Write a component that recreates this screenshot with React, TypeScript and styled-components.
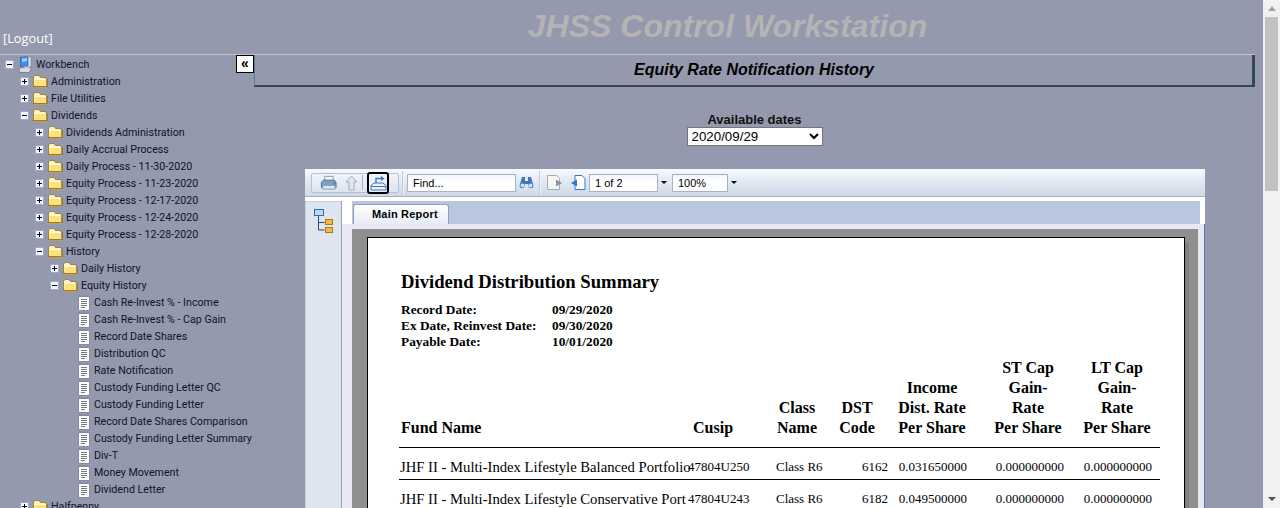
import React from 'react';
import styled, { createGlobalStyle } from 'styled-components';

const GlobalStyle = createGlobalStyle`
  html, body {
    margin: 0;
    padding: 0;
    height: 508px;
    overflow: hidden;
    background: #9499ad;
  }
`;

interface TreeNode {
  label: string;
  depth: number;
  kind: 'root' | 'open' | 'closed' | 'leaf';
}

const TREE: TreeNode[] = [
  { label: 'Workbench', depth: 0, kind: 'root' },
  { label: 'Administration', depth: 1, kind: 'closed' },
  { label: 'File Utilities', depth: 1, kind: 'closed' },
  { label: 'Dividends', depth: 1, kind: 'open' },
  { label: 'Dividends Administration', depth: 2, kind: 'closed' },
  { label: 'Daily Accrual Process', depth: 2, kind: 'closed' },
  { label: 'Daily Process - 11-30-2020', depth: 2, kind: 'closed' },
  { label: 'Equity Process - 11-23-2020', depth: 2, kind: 'closed' },
  { label: 'Equity Process - 12-17-2020', depth: 2, kind: 'closed' },
  { label: 'Equity Process - 12-24-2020', depth: 2, kind: 'closed' },
  { label: 'Equity Process - 12-28-2020', depth: 2, kind: 'closed' },
  { label: 'History', depth: 2, kind: 'open' },
  { label: 'Daily History', depth: 3, kind: 'closed' },
  { label: 'Equity History', depth: 3, kind: 'open' },
  { label: 'Cash Re-Invest % - Income', depth: 4, kind: 'leaf' },
  { label: 'Cash Re-Invest % - Cap Gain', depth: 4, kind: 'leaf' },
  { label: 'Record Date Shares', depth: 4, kind: 'leaf' },
  { label: 'Distribution QC', depth: 4, kind: 'leaf' },
  { label: 'Rate Notification', depth: 4, kind: 'leaf' },
  { label: 'Custody Funding Letter QC', depth: 4, kind: 'leaf' },
  { label: 'Custody Funding Letter', depth: 4, kind: 'leaf' },
  { label: 'Record Date Shares Comparison', depth: 4, kind: 'leaf' },
  { label: 'Custody Funding Letter Summary', depth: 4, kind: 'leaf' },
  { label: 'Div-T', depth: 4, kind: 'leaf' },
  { label: 'Money Movement', depth: 4, kind: 'leaf' },
  { label: 'Dividend Letter', depth: 4, kind: 'leaf' },
  { label: 'Halfpenny', depth: 1, kind: 'closed' },
];

const DATES = [
  ['Record Date:', '09/29/2020'],
  ['Ex Date, Reinvest Date:', '09/30/2020'],
  ['Payable Date:', '10/01/2020'],
];

const HEADERS = [
  ['Fund Name'],
  ['Cusip'],
  ['Class', 'Name'],
  ['DST', 'Code'],
  ['Income', 'Dist. Rate', 'Per Share'],
  ['ST Cap', 'Gain-', 'Rate', 'Per Share'],
  ['LT Cap', 'Gain-', 'Rate', 'Per Share'],
];

const FUNDS = [
  ['JHF II - Multi-Index Lifestyle Balanced Portfolio', '47804U250', 'Class R6', '6162', '0.031650000'],
  ['JHF II - Multi-Index Lifestyle Conservative Port', '47804U243', 'Class R6', '6182', '0.049500000'],
];

const Expander = ({ open }: { open: boolean }) => (
  <svg width="9" height="9" viewBox="0 0 9 9">
    <rect x="0.5" y="0.5" width="8" height="8" fill="#f4f6fa" stroke="#8fb0d0" />
    <path d={open ? 'M2 4.5h5' : 'M2 4.5h5M4.5 2v5'} stroke="#000" fill="none" />
  </svg>
);

const FolderIcon = () => (
  <svg width="16" height="15" viewBox="0 0 16 15">
    <path d="M1.500 12V3L3 1.500h4L8.500 3.500h5.500V12z" fill="#fff4c0" stroke="#a08438" />
    <path d="M2.500 5.500h11.500V12H2.500z" fill="#fbe27c" />
    <path d="M2.500 5.500h11.500" stroke="#fffbe0" />
    <path d="M1 12.500h13.500M15.500 5v8" stroke="#9c7a28" fill="none" />
    <path d="M2 13.500h13" stroke="#c0a050" />
  </svg>
);

const ComputerIcon = () => (
  <svg width="14" height="17" viewBox="0 0 14 17">
    <path d="M4 1 10 0 13 1.500V11l-8 1.500z" fill="#dfe2ec" stroke="#7a7f98" strokeWidth="0.7" />
    <path d="M2.500 1.500 10 0.800V9.500L2.500 10.500z" fill="#3f8fe8" stroke="#1f5fb8" strokeWidth="0.7" />
    <path d="M4 2.500 9 2.200V5L4 6z" fill="#9fd0ff" />
    <path d="M0.500 12.500 10 10.500 13.500 13 11 16.500H2z" fill="#d8dae4" stroke="#6a6f88" strokeWidth="0.7" />
  </svg>
);

const DocIcon = () => (
  <svg width="14" height="16" viewBox="0 0 14 16">
    <path d="M1.500 1.500h11v14h-11z" fill="#fcfcf8" stroke="#7f86b8" />
    <path d="M2 1h10" stroke="#8a7a50" strokeDasharray="1 1" />
    <path d="M4 4.500h6M4 6.500h6M4 8.500h6M4 10.500h6M4 12.500h4" stroke="#77777f" />
  </svg>
);

const PrintIcon = () => (
  <svg width="17" height="16" viewBox="0 0 18 16">
    <path d="M5 1h9v5H5z" fill="#f4f6fa" stroke="#8a9ab0" />
    <path d="M1.500 7 4 5h11l2 2v6H1.500z" fill="#7d9ec8" stroke="#4f6f98" />
    <path d="M3 10.500h13v4H3z" fill="#dfe6f0" stroke="#8a9ab0" />
    <rect x="14" y="7.500" width="2" height="2" fill="#4a9a4a" />
  </svg>
);

const UpIcon = () => (
  <svg width="13" height="16" viewBox="0 0 13 16">
    <path d="M6.500 1 12 7H9v8H4V7H1z" fill="#e3e6ea" stroke="#a8abb0" />
  </svg>
);

const ExportIcon = () => (
  <svg width="17" height="16" viewBox="0 0 17 16">
    <path d="M1 10.500 4 8h9l3 2.500V15H1z" fill="#e8f0fa" stroke="#3f78b8" />
    <path d="M1 11.500h15" stroke="#3f78b8" />
    <path d="M6 8V3.500h6" stroke="#3f78b8" fill="none" strokeWidth="1.400" />
    <path d="M11 1l3.500 2.500L11 6z" fill="#3f78b8" />
  </svg>
);

const BinocularsIcon = () => (
  <svg width="15" height="13" viewBox="0 0 15 13">
    <path d="M3 1h3v4h3V1h3l2.500 9-1 2H10L9 8H6l-1 4H1.500l-1-2z" fill="#3f78b8" />
    <circle cx="3.500" cy="9.500" r="2" fill="#cfe0f4" />
    <circle cx="11.500" cy="9.500" r="2" fill="#cfe0f4" />
  </svg>
);

const PageIcon = ({ active }: { active: boolean }) => {
  const tone = active ? '#2f78c8' : '#a8abb0';
  return (
    <svg width="16" height="15" viewBox="0 0 16 15">
      {active ? (
        <>
          <path d="M5 0.500h7l3 3v11H5z" fill="#fff" stroke={tone} />
          <path d="M7 4.500 1 8l6 3.500z" fill={tone} />
        </>
      ) : (
        <>
          <path d="M0.500 0.500h9l3 3v11H0.500z" fill="#f6f6f6" stroke={tone} />
          <path d="M9 4.500 15 8l-6 3.500z" fill="#8f9296" />
        </>
      )}
    </svg>
  );
};

const GroupTreeIcon = () => (
  <svg width="20" height="24" viewBox="0 0 20 24">
    <rect x="0.500" y="0.500" width="9" height="6" fill="#bcd8f4" stroke="#2f6ea8" />
    <path d="M4.500 7v14h6M4.500 13.500h6" stroke="#1f4f7f" fill="none" />
    <rect x="11.500" y="10.500" width="7" height="5" fill="#f4b840" stroke="#a87818" />
    <rect x="11.500" y="18.500" width="7" height="5" fill="#f4b840" stroke="#a87818" />
  </svg>
);

const App = () => (
  <Page>
    <GlobalStyle />
    <Workspace>
      <Header>
        <Logout>[Logout]</Logout>
        <AppTitle>JHSS Control Workstation</AppTitle>
      </Header>
      <Columns>
        <Sidebar>
          <CollapseButton>«</CollapseButton>
          {TREE.map((node) => (
            <TreeRow key={node.label} $depth={node.depth}>
              <ExpanderSlot>
                {node.kind !== 'leaf' && <Expander open={node.kind !== 'closed'} />}
              </ExpanderSlot>
              {node.kind === 'root' && <RootIconSlot><ComputerIcon /></RootIconSlot>}
              {(node.kind === 'open' || node.kind === 'closed') && <IconSlot><FolderIcon /></IconSlot>}
              {node.kind === 'leaf' && <IconSlot><DocIcon /></IconSlot>}
              <span>{node.label}</span>
            </TreeRow>
          ))}
        </Sidebar>
        <Content>
          <TitleBox>Equity Rate Notification History</TitleBox>
          <DatePicker>
            <DateLabel>Available dates</DateLabel>
            <DateSelect defaultValue="2020/09/29">
              <option>2020/09/29</option>
            </DateSelect>
          </DatePicker>
          <Viewer>
            <Toolbar>
              <ButtonGroup>
                <PrintSlot><PrintIcon /></PrintSlot>
                <UpIcon />
                <GroupRule />
                <ExportButton><ExportIcon /></ExportButton>
              </ButtonGroup>
              <ToolRule />
              <FindInput>Find...</FindInput>
              <BinocularsIcon />
              <PagerRule />
              <PageIcon active={false} />
              <ActivePageSlot><PageIcon active /></ActivePageSlot>
              <PageInput>1 of 2</PageInput>
              <Caret />
              <ZoomInput>100%</ZoomInput>
              <Caret />
            </Toolbar>
            <ViewerBody>
              <SidePanel><GroupTreeIcon /></SidePanel>
              <ReportColumn>
                <TabStrip><Tab>Main Report</Tab></TabStrip>
                <ReportFrame>
                  <GreyArea>
                    <ReportPage>
                      <ReportTitle>Dividend Distribution Summary</ReportTitle>
                      {DATES.map(([label, value]) => (
                        <MetaRow key={label}>
                          <span>{label}</span>
                          <span>{value}</span>
                        </MetaRow>
                      ))}
                      <HeaderRow>
                        {HEADERS.map((lines, index) => (
                          <HeaderCell key={lines.join()} $left={index < 2}>
                            {lines.map((line) => <div key={line}>{line}</div>)}
                          </HeaderCell>
                        ))}
                      </HeaderRow>
                      {FUNDS.map(([name, cusip, className, code, income]) => (
                        <FundRow key={cusip}>
                          <FundName>{name}</FundName>
                          <SmallCell>{cusip}</SmallCell>
                          <SmallCell>{className}</SmallCell>
                          <NumberCell>{code}</NumberCell>
                          <NumberCell>{income}</NumberCell>
                          <NumberCell>0.000000000</NumberCell>
                          <NumberCell>0.000000000</NumberCell>
                        </FundRow>
                      ))}
                    </ReportPage>
                  </GreyArea>
                </ReportFrame>
              </ReportColumn>
            </ViewerBody>
          </Viewer>
        </Content>
      </Columns>
    </Workspace>
    <ScrollTrack>
      <ScrollUp />
      <ScrollThumb />
      <ScrollDown />
    </ScrollTrack>
  </Page>
);

export default App;

const Page = styled.div`
  display: flex;
  width: 1280px;
  height: 508px;
  overflow: hidden;
  background: #9499ad;
`;

const Workspace = styled.div`
  width: 1255px;
  margin-right: 8px;
  flex-shrink: 0;
`;

const Header = styled.div`
  height: 54px;
  display: flex;
  position: relative;
  border-bottom: 1px solid #c4c4c4;
`;

const Logout = styled.div`
  align-self: flex-end;
  margin: 0 0 9px 3px;
  font: 12.8px/14px "Open Sans", sans-serif;
  color: #fff;
`;

const AppTitle = styled.div`
  position: absolute;
  left: 200px;
  right: 0;
  top: 7px;
  text-align: center;
  font: italic bold 32px/38px "Liberation Sans", sans-serif;
  color: #b4b4b4;
`;

const Columns = styled.div`
  display: flex;
`;

const Sidebar = styled.div`
  width: 254px;
  flex-shrink: 0;
  padding-top: 1px;
  position: relative;
`;

const CollapseButton = styled.div`
  position: absolute;
  top: 0;
  right: 0;
  width: 16px;
  height: 16px;
  border: 1px solid #000;
  background: #fff;
  text-align: center;
  font: bold 14px/14px "Liberation Sans", sans-serif;
  color: #000;
`;

const TreeRow = styled.div<{ $depth: number }>`
  display: flex;
  align-items: center;
  height: 17px;
  padding-left: ${({ $depth }) => 5 + $depth * 15}px;
  font: 10.67px/17px Roboto, sans-serif;
  color: #10122a;
  white-space: nowrap;
`;

const ExpanderSlot = styled.div`
  width: 9px;
  height: 9px;
  margin-right: 3px;
  display: flex;
  flex-shrink: 0;
`;

const IconSlot = styled.div`
  display: flex;
  flex-shrink: 0;
  margin-right: 3px;
`;

const RootIconSlot = styled.div`
  display: flex;
  flex-shrink: 0;
  margin: 0 4px 0 1px;
`;

const Content = styled.div`
  flex: 1;
  min-width: 0;
`;

const TitleBox = styled.div`
  height: 30px;
  border-left: 1px solid #4f7fa8;
  border-right: 3px solid #2f4a50;
  border-bottom: 2px solid #2f4a50;
  text-align: center;
  padding-left: 1px;
  font: italic bold 16px/30px "Liberation Sans", sans-serif;
  color: #000;
`;

const DatePicker = styled.div`
  margin-top: 25px;
  display: flex;
  flex-direction: column;
  align-items: center;
`;

const DateLabel = styled.div`
  font: bold 13px/15px "Liberation Sans", sans-serif;
  color: #111;
`;

const DateSelect = styled.select`
  width: 136px;
  height: 19px;
  padding: 0;
  border: 1px solid #767676;
  background: #fff;
  font: 13.33px "Liberation Sans", sans-serif;
  color: #000;
`;

const Viewer = styled.div`
  margin: 23px 0 0 51px;
  width: 900px;
  height: 339px;
  background: #fff;
`;

const Toolbar = styled.div`
  height: 27px;
  display: flex;
  align-items: center;
  gap: 3px;
  padding-left: 6px;
  background: linear-gradient(#f8fafd 0%, #e4ebf4 40%, #cdd9e8 100%);
  border-bottom: 1px solid #a9b0c2;
  font: 11px "Liberation Sans", sans-serif;
  color: #000;
`;

const ButtonGroup = styled.div`
  width: 88px;
  height: 20px;
  flex-shrink: 0;
  box-sizing: border-box;
  display: flex;
  align-items: center;
  gap: 4px;
  padding-left: 8px;
  border: 1px solid #b4c2d8;
  border-radius: 2px;
  background: linear-gradient(#f0f4fa, #dbe4f0);
`;

const PrintSlot = styled.div`
  display: flex;
  margin-right: 4px;
`;

const GroupRule = styled.div`
  width: 1px;
  height: 15px;
  flex-shrink: 0;
  background: #a9b4c6;
`;

const ExportButton = styled.div`
  width: 22px;
  height: 22px;
  flex-shrink: 0;
  box-sizing: border-box;
  display: flex;
  align-items: center;
  justify-content: center;
  border: 2px solid #000;
  border-radius: 3px;
  background: #edf2f8;
`;

const ToolRule = styled.div`
  width: 1px;
  height: 24px;
  background: #eef2f8;
  border-left: 1px solid #c2cddc;
`;

const PagerRule = styled(ToolRule)`
  margin: 0 3px 0 2px;
`;

const ActivePageSlot = styled.div`
  display: flex;
  margin-left: 4px;
`;

const ToolInput = styled.div`
  height: 18px;
  box-sizing: border-box;
  padding-left: 5px;
  border: 1px solid #a3b3cc;
  background: linear-gradient(#f4f6fa, #fff 40%);
  line-height: 16px;
`;

const FindInput = styled(ToolInput)`
  width: 109px;
`;

const PageInput = styled(ToolInput)`
  width: 69px;
`;

const ZoomInput = styled(ToolInput)`
  width: 56px;
  margin-left: 2px;
`;

const Caret = styled.div`
  width: 0;
  height: 0;
  border-left: 3px solid transparent;
  border-right: 3px solid transparent;
  border-top: 3px solid #000;
`;

const ViewerBody = styled.div`
  display: flex;
  margin-top: 4px;
  height: 308px;
`;

const SidePanel = styled.div`
  width: 35px;
  padding-top: 7px;
  display: flex;
  justify-content: center;
  align-items: flex-start;
  background: #dfe5ef;
  border: 1px solid #c6d0df;
  border-right-color: #8fa6c6;
`;

const ReportColumn = styled.div`
  flex: 1;
  min-width: 0;
  display: flex;
  flex-direction: column;
`;

const TabStrip = styled.div`
  height: 23px;
  flex-shrink: 0;
  margin: 0 5px 0 10px;
  padding-left: 1px;
  display: flex;
  align-items: flex-end;
  background: #b8c7de;
`;

const Tab = styled.div`
  width: 96px;
  height: 20px;
  box-sizing: border-box;
  padding-left: 18px;
  border: 1px solid #8fa3c0;
  border-bottom: none;
  border-radius: 3px 3px 0 0;
  background: linear-gradient(#fff, #e6ecf5);
  font: bold 11px/19px "Liberation Sans", sans-serif;
  letter-spacing: 0.2px;
  color: #000;
`;

const ReportFrame = styled.div`
  flex: 1;
  min-height: 0;
  padding: 5px 6px 0 10px;
  background: #e8e9f4;
  border-right: 1px solid #6a6a9c;
`;

const GreyArea = styled.div`
  height: 100%;
  box-sizing: border-box;
  padding: 8px 13px 0 15px;
  background: #8f8f8f;
`;

const ReportPage = styled.div`
  height: 400px;
  box-sizing: border-box;
  padding: 33px 24px 0 31px;
  background: #fff;
  border: 1px solid #000;
  box-shadow: 4px 6px 0 #7f7f7f;
`;

const ReportTitle = styled.div`
  margin: 0 0 9px 2px;
  font: bold 18.67px/22px "Liberation Serif", serif;
  color: #000;
`;

const MetaRow = styled.div`
  display: grid;
  grid-template-columns: 151px 1fr;
  margin-left: 2px;
  font: bold 13.33px/16px "Liberation Serif", serif;
  color: #000;
`;

const HeaderRow = styled.div`
  display: grid;
  grid-template-columns: 292px 69px 70px 50px 100px 92px 86px;
  align-items: end;
  margin-top: 8px;
  padding: 0 0 9px 2px;
  border-bottom: 1px solid #000;
  font: bold 16px/20px "Liberation Serif", serif;
  color: #000;
`;

const HeaderCell = styled.div<{ $left: boolean }>`
  text-align: ${({ $left }) => ($left ? 'left' : 'center')};
  white-space: nowrap;
`;

const FundRow = styled.div`
  display: grid;
  grid-template-columns: 288px 88px 55px 57px 79px 97px 88px;
  padding: 8px 0 0 1px;
  border-bottom: 1px solid #000;
  font: 13px/21px "Liberation Serif", serif;
  color: #000;
`;

const FundName = styled.div`
  font-size: 14.67px;
  line-height: 23px;
  white-space: nowrap;
`;

const SmallCell = styled.div`
  white-space: nowrap;
`;

const NumberCell = styled.div`
  text-align: right;
`;

const ScrollTrack = styled.div`
  width: 17px;
  flex-shrink: 0;
  display: flex;
  flex-direction: column;
  align-items: center;
  background: #f1f1f1;
`;

const ScrollUp = styled.div`
  width: 0;
  height: 0;
  margin-top: 6px;
  border-left: 4px solid transparent;
  border-right: 4px solid transparent;
  border-bottom: 5px solid #a3a3a3;
`;

const ScrollThumb = styled.div`
  width: 13px;
  height: 174px;
  margin-top: 6px;
  background: #c1c1c1;
`;

const ScrollDown = styled.div`
  width: 0;
  height: 0;
  margin: auto 0 7px;
  border-left: 4px solid transparent;
  border-right: 4px solid transparent;
  border-top: 4px solid #505050;
`;
